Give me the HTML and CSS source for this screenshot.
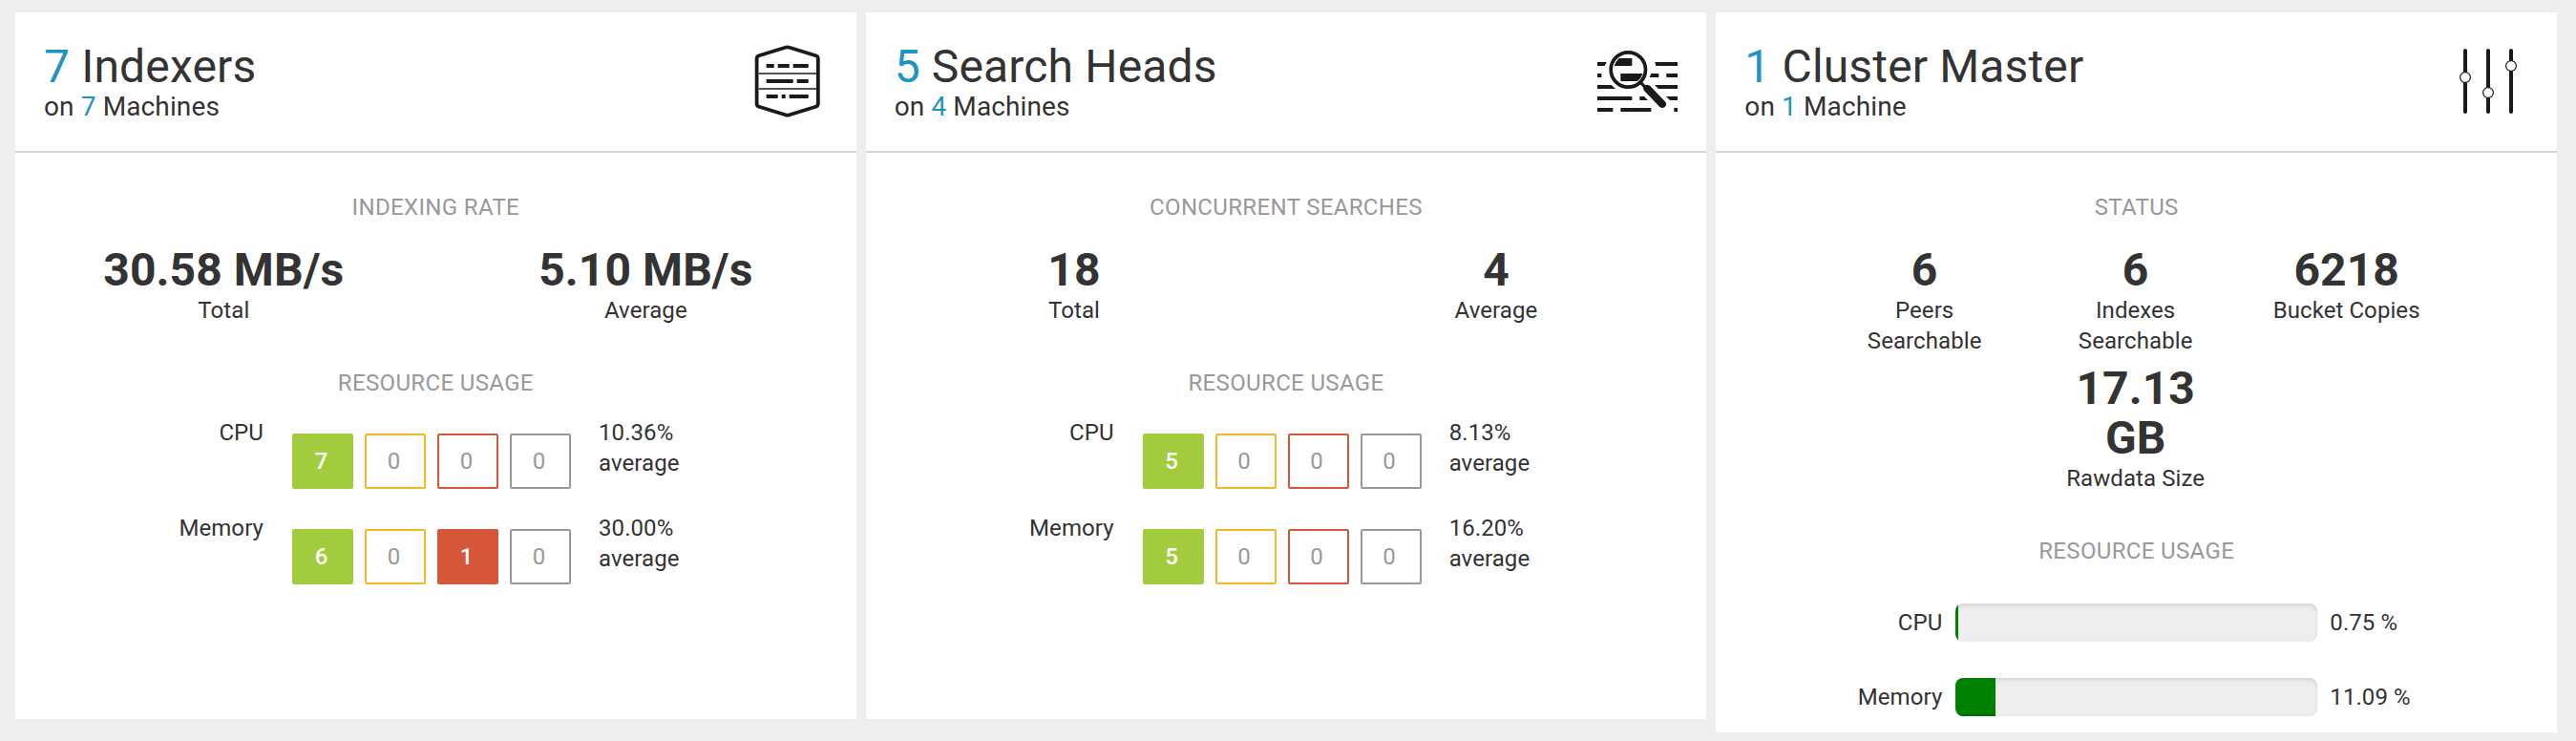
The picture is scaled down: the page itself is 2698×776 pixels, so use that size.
FILE: index.html
```html
<!DOCTYPE html>
<html lang="en">
<head>
<meta charset="utf-8">
<title>Overview</title>
<link rel="stylesheet" href="styles.css">
</head>
<body>
<main class="board">
  <section class="card">
    <header class="card-head">
      <div>
        <h2 class="title"><span class="num">7</span> Indexers</h2>
        <p class="subtitle">on <span class="num">7</span> Machines</p>
      </div>
      <svg class="icon icon-indexer" viewBox="50 47 70 76" fill="none" stroke="#1a1a18">
        <path stroke-width="3.8" stroke-linejoin="round" d="M52.6 61.5Q52.6 59 55 58.3L82.5 49.7Q84.7 48.9 86.9 49.7L114.4 58.3Q116.8 59 116.8 61.5V108.5Q116.8 111 114.4 111.7L86.9 120.3Q84.7 121.1 82.5 120.3L55 111.7Q52.6 111 52.6 108.5Z"/>
        <path stroke="#555" stroke-width="2" d="M54.5 77h60.5M54.5 93h60.5"/>
        <path stroke-width="4" d="M62.7 69h8m4 0h12m4 0h16M62.7 85h28m4 0h12M62.7 101h12m4 0h4m4 0h20"/>
      </svg>
    </header>
    <div class="card-body">
      <h3 class="label">INDEXING RATE</h3>
      <div class="stats two">
        <div class="stat"><b>30.58 MB/s</b><span>Total</span></div>
        <div class="stat"><b>5.10 MB/s</b><span>Average</span></div>
      </div>
      <h3 class="label">RESOURCE USAGE</h3>
      <div class="usage">
        <span class="name">CPU</span>
        <div class="boxes"><i class="box green on">7</i><i class="box yellow">0</i><i class="box red">0</i><i class="box gray">0</i></div>
        <span class="avg">10.36%<br>average</span>
      </div>
      <div class="usage">
        <span class="name">Memory</span>
        <div class="boxes"><i class="box green on">6</i><i class="box yellow">0</i><i class="box red on">1</i><i class="box gray">0</i></div>
        <span class="avg">30.00%<br>average</span>
      </div>
    </div>
  </section>

  <section class="card">
    <header class="card-head">
      <div>
        <h2 class="title"><span class="num">5</span> Search Heads</h2>
        <p class="subtitle">on <span class="num">4</span> Machines</p>
      </div>
      <svg class="icon icon-search" viewBox="99 69 252 195" fill="#1a1a18">
        <path d="M99 105H128L122 117H99ZM280 105H351V117H283ZM99 141H112V153H99ZM268 141H292V153H263ZM316 141H351V153H316ZM99 177H143L156 189H99ZM279 177H351V189H291ZM99 213H208V225H99ZM232 213H246L258 225H232ZM315 213H351V225H327ZM99 249H148V261H99ZM172 249H268V261H172ZM340 249H351V261H340Z"/>
        <path d="M167 93H208V117H152Q157 103 167 93ZM172 141H242Q237 156 225 165H172Z"/>
        <circle cx="196" cy="129" r="54.5" fill="none" stroke="#1a1a18" stroke-width="11"/>
        <path fill="none" stroke="#1a1a18" stroke-width="10" d="M233 167L252 187"/>
        <path d="M243 184Q242 178 248 177L258 177Q263 178 267 182L313 230Q318 238 312 245Q304 252 295 246L247 196Q243 192 243 184Z"/>
      </svg>
    </header>
    <div class="card-body">
      <h3 class="label">CONCURRENT SEARCHES</h3>
      <div class="stats two">
        <div class="stat"><b>18</b><span>Total</span></div>
        <div class="stat"><b>4</b><span>Average</span></div>
      </div>
      <h3 class="label">RESOURCE USAGE</h3>
      <div class="usage">
        <span class="name">CPU</span>
        <div class="boxes"><i class="box green on">5</i><i class="box yellow">0</i><i class="box red">0</i><i class="box gray">0</i></div>
        <span class="avg">8.13%<br>average</span>
      </div>
      <div class="usage">
        <span class="name">Memory</span>
        <div class="boxes"><i class="box green on">5</i><i class="box yellow">0</i><i class="box red">0</i><i class="box gray">0</i></div>
        <span class="avg">16.20%<br>average</span>
      </div>
    </div>
  </section>

  <section class="card tall">
    <header class="card-head">
      <div>
        <h2 class="title"><span class="num">1</span> Cluster Master</h2>
        <p class="subtitle">on <span class="num">1</span> Machine</p>
      </div>
      <svg class="icon icon-sliders" viewBox="76 51 60 68" stroke="#1a1a18">
        <path stroke-width="4" stroke-linecap="round" d="M82 53v64M106 53v64M130 53v64"/>
        <g fill="#fff" stroke-width="1.2"><circle cx="82" cy="81" r="5.4"/><circle cx="106" cy="97" r="5.4"/><circle cx="130" cy="69" r="5.4"/></g>
      </svg>
    </header>
    <div class="card-body">
      <h3 class="label">STATUS</h3>
      <div class="stats three">
        <div class="stat"><b>6</b><span>Peers Searchable</span></div>
        <div class="stat"><b>6</b><span>Indexes Searchable</span></div>
        <div class="stat"><b>6218</b><span>Bucket Copies</span></div>
        <div class="stat middle"><b>17.13 GB</b><span>Rawdata Size</span></div>
      </div>
      <h3 class="label">RESOURCE USAGE</h3>
      <div class="meters">
        <div class="meter"><span class="meter-name">CPU</span><div class="track"><div class="fill" style="width:0.75%"></div></div><span>0.75 %</span></div>
        <div class="meter"><span class="meter-name">Memory</span><div class="track"><div class="fill" style="width:11.09%"></div></div><span>11.09 %</span></div>
      </div>
    </div>
  </section>
</main>
</body>
</html>
```

FILE: styles.css
```css
* { box-sizing: border-box; margin: 0; padding: 0; }
body { background: #eee; color: #333; font: 24px/32px Roboto, sans-serif; letter-spacing: .08px; }

.board { display: grid; grid-template-columns: repeat(3, 1fr); gap: 10px; align-items: start; padding: 13px 20px 0 16px; }
.card { height: 740px; background: #fff; }
.card.tall { height: 754px; }

.card-head { display: flex; justify-content: space-between; height: 147px; padding: 33px 0 0 30px; border-bottom: 2px solid #d5d5d5; }
.title { font-size: 48px; line-height: 48px; font-weight: 400; letter-spacing: .15px; }
.subtitle { font-size: 28px; line-height: 36px; letter-spacing: .12px; }
.num { color: #1e93c6; }
.icon { display: block; flex: none; }
.icon-indexer { width: 70px; height: 76px; margin: 1px 37px 0 0; }
.icon-search { width: 84px; height: 65px; margin: 7px 30px 0 0; }
.icon-sliders { width: 60px; height: 68px; margin: 5px 42px 0 0; }

.card-body { padding-top: 41px; }
.label { color: #999; font-size: 24px; line-height: 32px; font-weight: 400; letter-spacing: .35px; text-align: center; }

.stats { display: grid; justify-content: center; justify-items: center; row-gap: 8px; margin: 24px 0 44px; }
.two { grid-template-columns: repeat(2, 442px); margin-inline: -3px -1px; }
.three { grid-template-columns: repeat(3, 221px); margin-inline: -1px 1px; }
.stat { display: flex; flex-direction: column; text-align: center; }
.stat b { font-size: 48px; line-height: 52px; font-weight: 700; }
.three .stat { width: 160px; }
.middle { grid-column: 2; }

.usage { display: grid; grid-template-columns: 260px 292px 1fr; column-gap: 30px; height: 100px; }
.label + .usage { margin-top: 20px; }
.name { text-align: right; }
.boxes { display: flex; gap: 12px; padding-top: 17px; }
.box { width: 64px; height: 58px; padding-right: 3px; border: 2px solid; border-radius: 2px; color: #999; font-style: normal; line-height: 54px; text-align: center; }
.green { border-color: #a2cc3e; }
.yellow { border-color: #f2b827; }
.red { border-color: #d6563c; }
.gray { border-color: #999; }
.on { color: #fff; font-weight: 500; }
.green.on { background: #a2cc3e; }
.red.on { background: #d6563c; }
.avg { margin-left: -1px; }

.meters { display: grid; row-gap: 38px; margin-top: 39px; }
.meter { display: grid; grid-template-columns: 238px 379px 1fr; column-gap: 13px; line-height: 41px; height: 40px; }
.meter-name { padding-right: 1px; text-align: right; }
.track { height: 40px; overflow: hidden; border-radius: 8px; background: #eee; box-shadow: inset 0 2px 4px rgba(0, 0, 0, .12); }
.fill { height: 100%; background: #008000; box-shadow: inset 0 -2px 0 rgba(0, 0, 0, .15); }
```
